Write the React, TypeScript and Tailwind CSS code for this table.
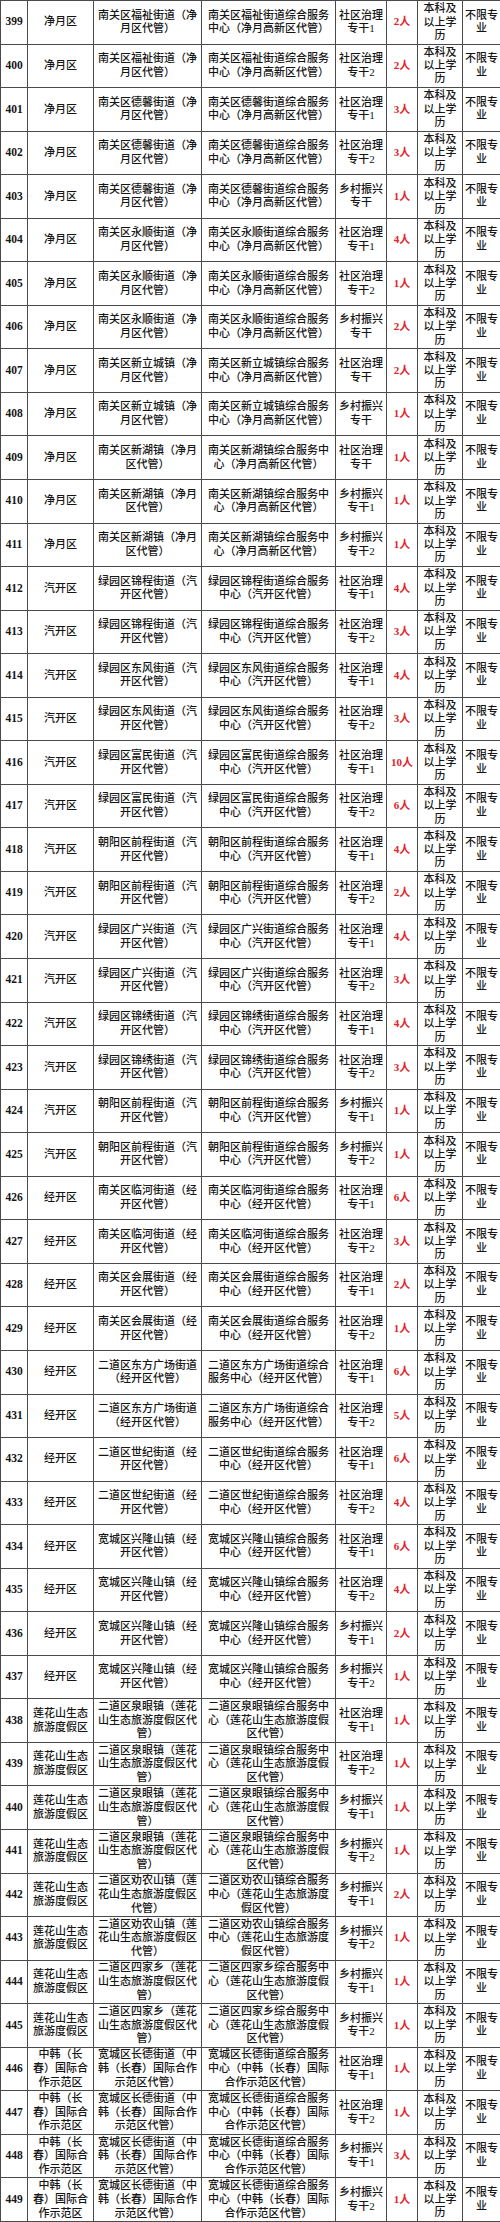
import React from "react";

type Row = [number, string, string, string, string, string];

const JY = "净月区";
const QK = "汽开区";
const JK = "经开区";
const LHS = "莲花山生态旅游度假区";
const ZH = "中韩（长|春）国际合|作示范区";

const jyStreet = (s: string): [string, string] => [
  `南关区${s}（净月区代管）`,
  `南关区${s}综合服务中心（净月高新区代管）`,
];
const qk = (s: string): [string, string] => [
  `${s}（汽开区代管）`,
  `${s}综合服务中心（汽开区代管）`,
];
const jk = (s: string): [string, string] => [
  `${s}（经开区代管）`,
  `${s}综合服务中心（经开区代管）`,
];
const lhs = (s: string): [string, string] => [
  `${s}（莲花山生态旅游度假区代管）`,
  `${s}综合服务中心（莲花山生态旅游度假区代管）`,
];
const zh: [string, string] = [
  "宽城区长德街道（中韩（长春）国际合作示范区代管）",
  "宽城区长德街道综合服务中心（中韩（长春）国际合作示范区代管）",
];

const SQ1 = "社区治理专干1";
const SQ2 = "社区治理专干2";
const SQ = "社区治理专干";
const XC = "乡村振兴专干";
const XC1 = "乡村振兴专干1";
const XC2 = "乡村振兴专干2";

const rows: Row[] = [
  [399, JY, ...jyStreet("福祉街道"), SQ1, "2人"],
  [400, JY, ...jyStreet("福祉街道"), SQ2, "2人"],
  [401, JY, ...jyStreet("德馨街道"), SQ1, "3人"],
  [402, JY, ...jyStreet("德馨街道"), SQ2, "3人"],
  [403, JY, ...jyStreet("德馨街道"), XC, "1人"],
  [404, JY, ...jyStreet("永顺街道"), SQ1, "4人"],
  [405, JY, ...jyStreet("永顺街道"), SQ2, "1人"],
  [406, JY, ...jyStreet("永顺街道"), XC, "2人"],
  [407, JY, ...jyStreet("新立城镇"), SQ, "2人"],
  [408, JY, ...jyStreet("新立城镇"), XC, "1人"],
  [409, JY, ...jyStreet("新湖镇"), SQ, "1人"],
  [410, JY, ...jyStreet("新湖镇"), XC1, "1人"],
  [411, JY, ...jyStreet("新湖镇"), XC2, "1人"],
  [412, QK, ...qk("绿园区锦程街道"), SQ1, "4人"],
  [413, QK, ...qk("绿园区锦程街道"), SQ2, "3人"],
  [414, QK, ...qk("绿园区东风街道"), SQ1, "4人"],
  [415, QK, ...qk("绿园区东风街道"), SQ2, "3人"],
  [416, QK, ...qk("绿园区富民街道"), SQ1, "10人"],
  [417, QK, ...qk("绿园区富民街道"), SQ2, "6人"],
  [418, QK, ...qk("朝阳区前程街道"), SQ1, "4人"],
  [419, QK, ...qk("朝阳区前程街道"), SQ2, "2人"],
  [420, QK, ...qk("绿园区广兴街道"), SQ1, "4人"],
  [421, QK, ...qk("绿园区广兴街道"), SQ2, "3人"],
  [422, QK, ...qk("绿园区锦绣街道"), SQ1, "4人"],
  [423, QK, ...qk("绿园区锦绣街道"), SQ2, "3人"],
  [424, QK, ...qk("朝阳区前程街道"), XC1, "1人"],
  [425, QK, ...qk("朝阳区前程街道"), XC2, "1人"],
  [426, JK, ...jk("南关区临河街道"), SQ1, "6人"],
  [427, JK, ...jk("南关区临河街道"), SQ2, "3人"],
  [428, JK, ...jk("南关区会展街道"), SQ1, "2人"],
  [429, JK, ...jk("南关区会展街道"), SQ2, "1人"],
  [430, JK, ...jk("二道区东方广场街道"), SQ1, "6人"],
  [431, JK, ...jk("二道区东方广场街道"), SQ2, "5人"],
  [432, JK, ...jk("二道区世纪街道"), SQ1, "6人"],
  [433, JK, ...jk("二道区世纪街道"), SQ2, "4人"],
  [434, JK, ...jk("宽城区兴隆山镇"), SQ1, "6人"],
  [435, JK, ...jk("宽城区兴隆山镇"), SQ2, "4人"],
  [436, JK, ...jk("宽城区兴隆山镇"), XC1, "2人"],
  [437, JK, ...jk("宽城区兴隆山镇"), XC2, "1人"],
  [438, LHS, ...lhs("二道区泉眼镇"), SQ1, "1人"],
  [439, LHS, ...lhs("二道区泉眼镇"), SQ2, "1人"],
  [440, LHS, ...lhs("二道区泉眼镇"), XC1, "1人"],
  [441, LHS, ...lhs("二道区泉眼镇"), XC2, "1人"],
  [442, LHS, ...lhs("二道区劝农山镇"), XC1, "2人"],
  [443, LHS, ...lhs("二道区劝农山镇"), XC2, "1人"],
  [444, LHS, ...lhs("二道区四家乡"), XC1, "1人"],
  [445, LHS, ...lhs("二道区四家乡"), XC2, "1人"],
  [446, ZH, ...zh, SQ1, "1人"],
  [447, ZH, ...zh, SQ2, "1人"],
  [448, ZH, ...zh, XC1, "3人"],
  [449, ZH, ...zh, XC2, "1人"],
];

// split into fixed-length lines (or on "|" when given explicitly)
function lines(text: string, n: number): string[] {
  if (text.includes("|")) return text.split("|");
  const chars = Array.from(text);
  const out: string[] = [];
  for (let i = 0; i < chars.length; i += n) out.push(chars.slice(i, i + n).join(""));
  return out;
}

const Cell: React.FC<{ text: string; n: number; className?: string }> = ({ text, n, className }) => (
  <td className={`border border-[#4a4a4a] px-0 text-center align-middle whitespace-nowrap ${className ?? ""}`}>
    {lines(text, n).map((l, i) => (
      <div key={i}>{l}</div>
    ))}
  </td>
);

export default function App() {
  return (
    <div className="w-[500px] bg-white">
      <table
        className="w-[500px] h-[2222px] table-fixed border-collapse text-[11px] leading-[13.7px] font-medium text-[#151515]"
        style={{ fontFamily: '"Liberation Serif", "Noto Sans CJK SC", serif' }}
      >
        <colgroup>
          <col className="w-[27px]" />
          <col className="w-[66px]" />
          <col className="w-[108px]" />
          <col className="w-[134px]" />
          <col className="w-[51px]" />
          <col className="w-[31px]" />
          <col className="w-[45px]" />
          <col className="w-[38px]" />
        </colgroup>
        <tbody>
          {rows.map(([no, area, street, center, post, count]) => (
            <tr key={no} className="h-[43.5px]">
              <td className="border border-[#4a4a4a] text-center align-middle font-bold text-[11.5px]">{no}</td>
              <Cell text={area} n={5} />
              <Cell text={street} n={9} />
              <Cell text={center} n={11} />
              <Cell text={post} n={4} />
              <td className="border border-[#4a4a4a] text-center align-middle font-bold text-[#e0242b] whitespace-nowrap">
                {count}
              </td>
              <Cell text="本科及以上学历" n={3} className="leading-[13.3px]" />
              <Cell text="不限专业" n={3} />
            </tr>
          ))}
        </tbody>
      </table>
    </div>
  );
}
